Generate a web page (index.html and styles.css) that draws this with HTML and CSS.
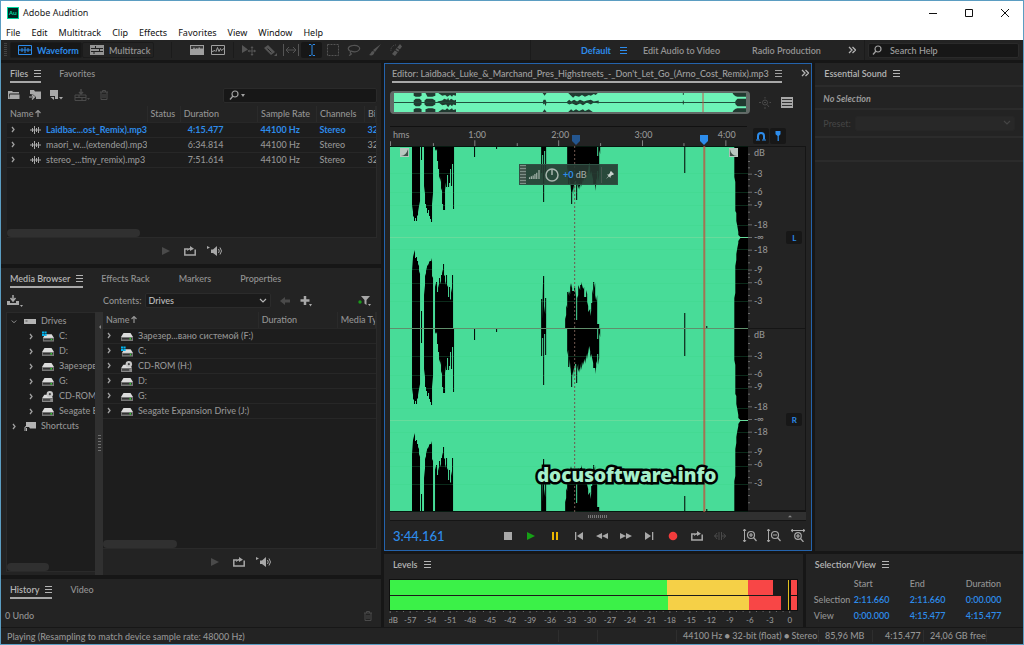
FILE: index.html
```html
<!DOCTYPE html>
<html lang="en">
<head>
  <meta charset="UTF-8" />
  <title>Adobe Audition</title>
  <link rel="stylesheet" href="styles.css">
</head>
<body>

  <svg class="sprite" aria-hidden="true">
    <symbol id="i-menu" viewBox="0 0 8 8"><path d="M1 1.500h7M1 4.500h7M1 7.500h7" stroke="currentColor" stroke-width="1"/></symbol>
    <symbol id="i-more" viewBox="0 0 8 8"><path d="M1 1l3 3-3 3M4.500 1l3 3-3 3" fill="none" stroke="currentColor" stroke-width="1.300"/></symbol>
    <symbol id="i-wave" viewBox="0 0 14 10"><path d="M.5.5h13v9H.5zM1 5h12M4 3v4M7 2v6M10 3v4" fill="none" stroke="currentColor"/></symbol>
    <symbol id="i-multi" viewBox="0 0 14 10"><path d="M0 0h14v10H0z" fill="currentColor"/><path d="M1 3.500h12M1 6.500h12M5.500 1v2M9.500 3.500v3M4 7v2" stroke="#232323"/></symbol>
    <symbol id="i-spec" viewBox="0 0 14 10"><path d="M0 0h14v10H0z" fill="currentColor"/><path d="M1 4V1h12v3l-1-1-1 1-2-2-1 2-1-1-2 1-1-2-1 2z" fill="#3a3a3a"/></symbol>
    <symbol id="i-pitch" viewBox="0 0 14 10"><path d="M.5.5h13v9H.5z M1 6.500l3-1 1 1 1.500-4 1.500 4 1.500-3 1 2 2.500-2" fill="none" stroke="currentColor"/></symbol>
    <symbol id="i-move" viewBox="0 0 14 12"><path d="M0 1l6 4.500L0 9z" fill="currentColor"/><path d="M10 3v8M6.500 7h7" stroke="currentColor"/><path d="M10 2l1.500 2h-3zM10 12l1.500-2h-3zM5.500 7l2-1.500v3zM14 7l-2-1.500v3z" fill="currentColor"/></symbol>
    <symbol id="i-razor" viewBox="0 0 14 12"><path d="M1 4l4-3 7 7-4 3z" fill="currentColor"/><path d="M4.500 4.500l4 4" stroke="#232323"/><path d="M14 9v3h-3z" fill="currentColor"/></symbol>
    <symbol id="i-slip" viewBox="0 0 16 12"><path d="M.5 0v12M15.500 0v12M3 6h10M6 3L3 6l3 3M10 3l3 3-3 3" fill="none" stroke="currentColor"/></symbol>
    <symbol id="i-time" viewBox="0 0 8 12"><path d="M1 .5h2l1 1 1-1h2M4 1.500v9M1 11.500h2l1-1 1 1h2" fill="none" stroke="currentColor"/></symbol>
    <symbol id="i-marquee" viewBox="0 0 12 12"><path d="M.5.5h11v11H.5z" fill="none" stroke="currentColor" stroke-dasharray="2 1"/></symbol>
    <symbol id="i-lasso" viewBox="0 0 14 12"><path d="M3 7C0 5 1 2 6 1.500s8 2 6 4.500-6 2-8 1c-1 1-1 2 0 2.500S3 11 2 11.500" fill="none" stroke="currentColor" stroke-width="1.200"/></symbol>
    <symbol id="i-brush" viewBox="0 0 12 12"><path d="M12 0L6 8 4 6zM4 7c-2 0-2 3-4 4 3 1 5 0 5.500-3z" fill="currentColor"/></symbol>
    <symbol id="i-heal" viewBox="0 0 12 12"><path d="M10 0l2 2.500L5 12l-3-2z" fill="currentColor"/><path d="M6 1a5 5 0 0 0-5 6" fill="none" stroke="currentColor" stroke-dasharray="1 1"/><path d="M5 6l3 2M7 4l3 2" stroke="#232323"/></symbol>
    <symbol id="i-search" viewBox="0 0 10 10"><circle cx="6" cy="4" r="3" fill="none" stroke="currentColor" stroke-width="1.200"/><path d="M4 6L1 9.500" stroke="currentColor" stroke-width="1.300"/></symbol>
    <symbol id="i-folder" viewBox="0 0 12 10"><path d="M0 1h4l1 1h6v1.500H1.500L1 5v4H0z M2 4.500h9.500V9H1z" fill="currentColor"/></symbol>
    <symbol id="i-import" viewBox="0 0 14 10"><path d="M2 0h4l1 1.500h6V9H8V7L5 4.500 2 4z" fill="currentColor"/><path d="M1 7h5M4 5l2.500 2L4 9.500" fill="none" stroke="currentColor" stroke-width="1.200"/></symbol>
    <symbol id="i-new" viewBox="0 0 14 10"><path d="M1 0h8v9H6V6H1z" fill="currentColor"/><path d="M1.500 7L5 7v3z M10 7h4l-2 2.500z" fill="currentColor"/></symbol>
    <symbol id="i-insert" viewBox="0 0 16 12"><path d="M1 6h11v5.500H1z M1 8.500h11M5 6v2M8 8v3" fill="none" stroke="currentColor"/><path d="M7 0v4M5 3l2 2 2-2" fill="none" stroke="currentColor" stroke-width="1.500"/><path d="M13 9h3l-1.500 2z" fill="currentColor"/></symbol>
    <symbol id="i-trash" viewBox="0 0 10 10"><path d="M1 2h8M3.500 2V.5h3V2M2 2v7.500h6V2M4 4v4M6 4v4" fill="none" stroke="currentColor"/></symbol>
    <symbol id="i-audio" viewBox="0 0 11 8"><path d="M0 4h11M2.500 2v4M4.500 0v8M6.500 2v4M8.500 1v6" stroke="currentColor"/></symbol>
    <symbol id="i-right" viewBox="0 0 6 8"><path d="M2 1l2 2.500L2 6" fill="none" stroke="currentColor" stroke-width="1.300"/></symbol>
    <symbol id="i-down" viewBox="0 0 8 6"><path d="M1 1l3 3 3-3" fill="none" stroke="currentColor" stroke-width="1.200"/></symbol>
    <symbol id="i-up" viewBox="0 0 6 8"><path d="M3 0v7M.5 3L3 .5 5.500 3" fill="none" stroke="currentColor" stroke-width="1.200"/></symbol>
    <symbol id="i-play" viewBox="0 0 12 10"><path d="M2 1l8 4-8 4z" fill="currentColor"/></symbol>
    <symbol id="i-loop" viewBox="0 0 12 10"><path d="M4 3H.8v6h10.400V3.500" fill="none" stroke="currentColor" stroke-width="1.500"/><path d="M3 5c0-2 1-3 3-3V0l4 2.800L6 5V3.500c-1 0-2 .5-3 1.500z" fill="currentColor"/></symbol>
    <symbol id="i-speaker" viewBox="0 0 16 10"><path d="M0 0l3 1.500L0 3z M4 3.500h2L10 0v10L6 7H4z" fill="currentColor"/><path d="M11.500 3q1.500 2 0 4M13 1.500q3 3.500 0 7" fill="none" stroke="currentColor"/></symbol>
    <symbol id="i-ingest" viewBox="0 0 16 12"><path d="M0 6h3v2h6V6h3v4H0z" fill="currentColor"/><path d="M6 0v5M3.500 3L6 6l2.500-3" fill="none" stroke="currentColor" stroke-width="1.500"/><path d="M13 10h3l-1.500 2z" fill="currentColor"/></symbol>
    <symbol id="i-back" viewBox="0 0 10 10"><path d="M0 5l5-4v2.500h5v3H5V9z" fill="currentColor"/></symbol>
    <symbol id="i-plus" viewBox="0 0 12 12"><path d="M5 1v9M.5 5.500h9" stroke="currentColor" stroke-width="2.500"/><path d="M9 9h3l-1.500 2.500z" fill="currentColor"/></symbol>
    <symbol id="i-filter" viewBox="0 0 14 12"><circle cx="2" cy="7" r="1.700" fill="#1a9a1a"/><path d="M3 1h9L8.500 5v5L6.500 8.500V5z" fill="currentColor"/><path d="M10 9h3l-1.500 2z" fill="currentColor"/></symbol>
    <symbol id="i-drive" viewBox="0 0 12 9"><path d="M2.500 1h7L12 5H0z" fill="#dcdcdc"/><path d="M0 5h12v4H0z" fill="#777"/><path d="M1 6h10v1.500H1z" fill="#333"/><path d="M8.500 6h1.500v1.500H8.500z" fill="#28d228"/></symbol>
    <symbol id="i-cdrive" viewBox="0 0 13 11"><path d="M3.500 3h7L13 7H1z" fill="#dcdcdc"/><path d="M1 7h12v4H1z" fill="#777"/><path d="M2 8h10v1.500H2z" fill="#333"/><path d="M9.500 8H11v1.500H9.500z" fill="#28d228"/><path d="M0 0h2.300v2.300H0zM2.700 0H5v2.300H2.700zM0 2.700h2.300V5H0zM2.700 2.700H5V5H2.700z" fill="#00b4f0"/></symbol>
    <symbol id="i-cdrom" viewBox="0 0 13 12"><path d="M2.500 4h7L12 8H0z" fill="#dcdcdc"/><path d="M0 8h12v4H0z" fill="#888"/><path d="M1 9h8v1.500H1z" fill="#333"/><circle cx="8.500" cy="3.500" r="3.500" fill="#c8c8c8"/><circle cx="8.500" cy="3.500" r="1.200" fill="#444"/></symbol>
    <symbol id="i-drives" viewBox="0 0 12 5"><path d="M0 0h12v5H0z" fill="#b4b4b4"/><path d="M1.500 2h2" stroke="#555"/></symbol>
    <symbol id="i-short" viewBox="0 0 12 9"><path d="M2 0h10v6.500H6L5 5H2z" fill="#b4b4b4"/><path d="M1 9V5l3-1.500M2.500 9V6" stroke="#b4b4b4" fill="none"/></symbol>
    <symbol id="i-zoomnav" viewBox="0 0 12 12"><circle cx="6" cy="5.500" r="2.500" fill="none" stroke="currentColor"/><path d="M8 7.500l2 2.500M5 5.500h2M6 0v1.500M6 10v2M0 5.500h2M10.500 5.500H12" stroke="currentColor"/></symbol>
    <symbol id="i-rows" viewBox="0 0 12 12"><path d="M0 0h12v11H0z" fill="currentColor"/><path d="M1 2.500h10M1 5.500h10M1 8.500h10" stroke="#333"/></symbol>
    <symbol id="i-magnet" viewBox="0 0 10 10"><path d="M2 8.500V5a3 3 0 0 1 6 0v3.500" fill="none" stroke="currentColor" stroke-width="2"/><path d="M0 9h4M6 9h4" stroke="currentColor"/></symbol>
    <symbol id="i-pin" viewBox="0 0 8 12"><path d="M1 0h6v4L5 6v6H3.500V6L1 4z" fill="currentColor"/></symbol>
    <symbol id="i-stop" viewBox="0 0 12 10"><path d="M2 1h8v8H2z" fill="currentColor"/></symbol>
    <symbol id="i-pause" viewBox="0 0 12 10"><path d="M3 1h2v8H3zM7 1h2v8H7z" fill="currentColor"/></symbol>
    <symbol id="i-first" viewBox="0 0 12 10"><path d="M2 1h1.300v8H2zM10 1v8L4 5z" fill="currentColor"/></symbol>
    <symbol id="i-last" viewBox="0 0 12 10"><path d="M9 1h1.300v8H9zM2 1v8l6-4z" fill="currentColor"/></symbol>
    <symbol id="i-rew" viewBox="0 0 12 10"><path d="M6 2v6L0 5zM12 2v6L6 5z" fill="currentColor"/></symbol>
    <symbol id="i-fwd" viewBox="0 0 12 10"><path d="M0 2v6l6-3zM6 2v6l6-3z" fill="currentColor"/></symbol>
    <symbol id="i-rec" viewBox="0 0 12 10"><circle cx="6" cy="5" r="4.300" fill="currentColor"/></symbol>
    <symbol id="i-skip" viewBox="0 0 12 10"><path d="M3 2L.8 5 3 8M0 5h4M5 1v8M7.500 1v8M8 5h4M9.500 2.500L11.500 5 9.500 7.500" fill="none" stroke="currentColor"/></symbol>
    <symbol id="i-vin" viewBox="0 0 14 13"><path d="M1.500 0v13M0 2L1.500 0 3 2M0 11l1.500 2L3 11" fill="none" stroke="currentColor"/><circle cx="8" cy="6" r="3.500" fill="none" stroke="currentColor" stroke-width="1.200"/><path d="M10.500 8.500l3 3.500M6 6h4M8 4v4" stroke="currentColor" stroke-width="1.200"/></symbol>
    <symbol id="i-vout" viewBox="0 0 14 13"><path d="M1.500 0v13M0 2L1.500 0 3 2M0 11l1.500 2L3 11" fill="none" stroke="currentColor"/><circle cx="8" cy="6" r="3.500" fill="none" stroke="currentColor" stroke-width="1.200"/><path d="M10.500 8.500l3 3.500M6 6h4" stroke="currentColor" stroke-width="1.200"/></symbol>
    <symbol id="i-hin" viewBox="0 0 14 13"><path d="M0 1.500h14M2 0L0 1.500 2 3M12 0l2 1.500L12 3" fill="none" stroke="currentColor"/><circle cx="7" cy="7" r="3.300" fill="none" stroke="currentColor" stroke-width="1.200"/><path d="M9.500 9.500l3 3.500M5 7h4M7 5v4" stroke="currentColor" stroke-width="1.200"/></symbol>
  </svg>

  <header class="titlebar">
    <svg class="logo" viewBox="0 0 12 12"><rect x=".5" y=".5" width="11" height="11" fill="#00241f" stroke="#00d8a0"/><text x="6" y="8" class="logo-text">Au</text></svg>
    <span class="title">Adobe Audition</span>
    <button class="win-btn" aria-label="Minimize"><svg viewBox="0 0 10 10"><path d="M1 5.500h8" stroke="#111"/></svg></button>
    <button class="win-btn" aria-label="Maximize"><svg viewBox="0 0 10 10"><path d="M1.500 1.500h7v7h-7z" fill="none" stroke="#111"/></svg></button>
    <button class="win-btn" aria-label="Close"><svg viewBox="0 0 10 10"><path d="M1 1l8 8M9 1L1 9" stroke="#111"/></svg></button>
  </header>
  <nav class="menubar">
    <button>File</button><button>Edit</button><button>Multitrack</button><button>Clip</button><button>Effects</button><button>Favorites</button><button>View</button><button>Window</button><button>Help</button>
  </nav>

  <div class="toolbar">
    <span class="grip"></span>
    <button class="mode active"><svg class="ic"><use href="#i-wave"/></svg>Waveform</button>
    <button class="mode"><svg class="ic"><use href="#i-multi"/></svg>Multitrack</button>
    <div class="tools views">
      <button class="tool lit" aria-label="Spectral frequency"><svg class="ic"><use href="#i-spec"/></svg></button>
      <button class="tool lit" aria-label="Spectral pitch"><svg class="ic"><use href="#i-pitch"/></svg></button>
    </div>
    <div class="tools">
      <button class="tool" aria-label="Move"><svg class="ic"><use href="#i-move"/></svg></button>
      <button class="tool" aria-label="Razor"><svg class="ic"><use href="#i-razor"/></svg></button>
      <button class="tool" aria-label="Slip"><svg class="ic wide"><use href="#i-slip"/></svg></button>
      <button class="tool active" aria-label="Time selection"><svg class="ic"><use href="#i-time"/></svg></button>
      <button class="tool" aria-label="Marquee"><svg class="ic"><use href="#i-marquee"/></svg></button>
      <button class="tool" aria-label="Lasso"><svg class="ic"><use href="#i-lasso"/></svg></button>
      <button class="tool" aria-label="Paintbrush"><svg class="ic"><use href="#i-brush"/></svg></button>
      <button class="tool" aria-label="Spot healing"><svg class="ic"><use href="#i-heal"/></svg></button>
    </div>
    <div class="workspaces">
      <button class="ws active">Default <svg class="mi"><use href="#i-menu"/></svg></button>
      <button class="ws">Edit Audio to Video</button>
      <button class="ws">Radio Production</button>
      <button class="ws more" aria-label="More workspaces"><svg class="mi"><use href="#i-more"/></svg></button>
    </div>
    <label class="field help"><svg class="ic"><use href="#i-search"/></svg><input type="text" placeholder="Search Help" aria-label="Search Help"></label>
  </div>

  <main class="workspace">
    <div class="left">
      <section class="panel files">
        <div class="tabs">
          <button class="tab active">Files <svg class="mi"><use href="#i-menu"/></svg></button>
          <button class="tab">Favorites</button>
        </div>
        <div class="bar">
          <button class="icon-btn" aria-label="Open"><svg class="ic"><use href="#i-folder"/></svg></button>
          <button class="icon-btn" aria-label="Import"><svg class="ic"><use href="#i-import"/></svg></button>
          <button class="icon-btn" aria-label="New"><svg class="ic"><use href="#i-new"/></svg></button>
          <button class="icon-btn off insert" aria-label="Insert"><svg class="ic wide"><use href="#i-insert"/></svg></button>
          <button class="icon-btn off" aria-label="Delete"><svg class="ic"><use href="#i-trash"/></svg></button>
          <label class="field filter"><svg class="ic"><use href="#i-search"/></svg><svg class="caret" viewBox="0 0 4 3"><path d="M0 0h4L2 3z"/></svg><input type="text" aria-label="Search files"></label>
        </div>
        <div class="list files-list">
          <table class="grid files-grid">
            <colgroup><col class="c-name"><col class="c-status"><col class="c-dur"><col class="c-rate"><col class="c-chan"><col class="c-bit"></colgroup>
            <thead><tr><th>Name<svg class="sort"><use href="#i-up"/></svg></th><th>Status</th><th>Duration</th><th>Sample Rate</th><th>Channels</th><th>Bi</th></tr></thead>
            <tbody>
              <tr class="open"><td><svg class="arrow"><use href="#i-right"/></svg><svg class="wav"><use href="#i-audio"/></svg>Laidbac...ost_Remix).mp3</td><td></td><td class="num">4:15.477</td><td class="num">44100 Hz</td><td>Stereo</td><td>32</td></tr>
              <tr><td><svg class="arrow"><use href="#i-right"/></svg><svg class="wav"><use href="#i-audio"/></svg>maori_w...(extended).mp3</td><td></td><td class="num">6:34.814</td><td class="num">44100 Hz</td><td>Stereo</td><td>32</td></tr>
              <tr><td><svg class="arrow"><use href="#i-right"/></svg><svg class="wav"><use href="#i-audio"/></svg>stereo_...tiny_remix).mp3</td><td></td><td class="num">7:51.614</td><td class="num">44100 Hz</td><td>Stereo</td><td>32</td></tr>
            </tbody>
          </table>
          <div class="scroll scroll-files"></div>
        </div>
        <div class="preview">
          <button class="icon-btn off" aria-label="Play"><svg class="ic"><use href="#i-play"/></svg></button>
          <button class="icon-btn" aria-label="Loop"><svg class="ic"><use href="#i-loop"/></svg></button>
          <button class="icon-btn" aria-label="Auto-play"><svg class="ic wide"><use href="#i-speaker"/></svg></button>
        </div>
      </section>

      <section class="panel media">
        <div class="tabs">
          <button class="tab active">Media Browser <svg class="mi"><use href="#i-menu"/></svg></button>
          <button class="tab">Effects Rack</button>
          <button class="tab gap">Markers</button>
          <button class="tab gap">Properties</button>
        </div>
        <div class="bar media-bar">
          <button class="icon-btn ingest" aria-label="Ingest"><svg class="ic wide"><use href="#i-ingest"/></svg></button>
          <label for="contents">Contents:</label>
          <span class="select"><select id="contents"><option>Drives</option></select><svg class="mi"><use href="#i-down"/></svg></span>
          <button class="icon-btn off" aria-label="Back"><svg class="ic small"><use href="#i-back"/></svg></button>
          <button class="icon-btn" aria-label="Add shortcut"><svg class="ic"><use href="#i-plus"/></svg></button>
          <button class="icon-btn funnel" aria-label="Filter"><svg class="ic"><use href="#i-filter"/></svg></button>
        </div>
        <div class="browser">
          <div class="tree">
            <ul>
              <li><svg class="arrow"><use href="#i-down"/></svg><svg class="dev"><use href="#i-drives"/></svg>Drives
                <ul>
                  <li><svg class="arrow"><use href="#i-right"/></svg><svg class="dev"><use href="#i-cdrive"/></svg>C:</li>
                  <li><svg class="arrow"><use href="#i-right"/></svg><svg class="dev"><use href="#i-drive"/></svg>D:</li>
                  <li><svg class="arrow"><use href="#i-right"/></svg><svg class="dev"><use href="#i-drive"/></svg>Зарезерв</li>
                  <li><svg class="arrow"><use href="#i-right"/></svg><svg class="dev"><use href="#i-drive"/></svg>G:</li>
                  <li><svg class="arrow"><use href="#i-right"/></svg><svg class="dev"><use href="#i-cdrom"/></svg>CD-ROM</li>
                  <li><svg class="arrow"><use href="#i-right"/></svg><svg class="dev"><use href="#i-drive"/></svg>Seagate E</li>
                </ul>
              </li>
              <li><svg class="arrow"><use href="#i-right"/></svg><svg class="dev"><use href="#i-short"/></svg>Shortcuts</li>
            </ul>
            <div class="scroll scroll-tree"></div>
          </div>
          <div class="splitter"><span class="fold"></span><span class="dots"></span></div>
          <div class="content">
            <div class="list drive-list">
              <table class="grid drive-grid">
                <colgroup><col class="d-name"><col class="d-dur"><col></colgroup>
                <thead><tr><th>Name<svg class="sort"><use href="#i-up"/></svg></th><th>Duration</th><th>Media Ty</th></tr></thead>
                <tbody>
                  <tr><td><svg class="arrow"><use href="#i-right"/></svg><svg class="dev"><use href="#i-drive"/></svg>Зарезер...вано системой (F:)</td><td></td><td></td></tr>
                  <tr><td><svg class="arrow"><use href="#i-right"/></svg><svg class="dev"><use href="#i-cdrive"/></svg>C:</td><td></td><td></td></tr>
                  <tr><td><svg class="arrow"><use href="#i-right"/></svg><svg class="dev"><use href="#i-cdrom"/></svg>CD-ROM (H:)</td><td></td><td></td></tr>
                  <tr><td><svg class="arrow"><use href="#i-right"/></svg><svg class="dev"><use href="#i-drive"/></svg>D:</td><td></td><td></td></tr>
                  <tr><td><svg class="arrow"><use href="#i-right"/></svg><svg class="dev"><use href="#i-drive"/></svg>G:</td><td></td><td></td></tr>
                  <tr><td><svg class="arrow"><use href="#i-right"/></svg><svg class="dev"><use href="#i-drive"/></svg>Seagate Expansion Drive (J:)</td><td></td><td></td></tr>
                </tbody>
              </table>
              <div class="scroll scroll-drives"></div>
            </div>
            <div class="preview">
              <button class="icon-btn off" aria-label="Play"><svg class="ic"><use href="#i-play"/></svg></button>
              <button class="icon-btn" aria-label="Loop"><svg class="ic"><use href="#i-loop"/></svg></button>
              <button class="icon-btn" aria-label="Auto-play"><svg class="ic wide"><use href="#i-speaker"/></svg></button>
            </div>
          </div>
        </div>
      </section>

      <section class="panel history">
        <div class="tabs">
          <button class="tab active">History <svg class="mi"><use href="#i-menu"/></svg></button>
          <button class="tab">Video</button>
        </div>
        <div class="undo"><span>0 Undo</span><button class="icon-btn off" aria-label="Clear history"><svg class="ic small"><use href="#i-trash"/></svg></button></div>
      </section>
    </div>

    <div class="right">
      <div class="top">
        <section class="panel editor">
          <div class="tabs">
            <button class="tab active">Editor: Laidback_Luke_&amp;_Marchand_Pres_Highstreets_-_Don't_Let_Go_(Arno_Cost_Remix).mp3 <svg class="mi"><use href="#i-menu"/></svg></button>
            <button class="tab more" aria-label="More tabs"><svg class="mi"><use href="#i-more"/></svg></button>
          </div>

          <div class="nav-row">
            <div class="overview">
              <svg viewBox="0 0 358 20" preserveAspectRatio="none">
                <g fill="#203a30">
                  <path d="M20 0h8v3l-2 1h-4l-2-1zM32 0h10v3l-3 1h-5zM45 0h18v3l-3-1-1 2-2-2-3 2-2-2-3 1zM151 0h4l-2 3zM177 0h30l-2 2-2-1-3 2-2-1-4 2-3-2-3 2-4-1-2 2z"/>
                  <path d="M20 8l2-2h4l2 2v4l-2 2h-4l-2-2zM31 8l2-2h6l3 2v4l-3 2h-6l-2-2zM44 9l5-1 2-2 3 1 1-2 1 3 2-2 3 2 2-1v6l-3-1-1 2-2-2-2 3-2-3-4 1zM151 10l1-3h2l1 3-1 4-1-3-1 1zM175 10l3-3 2 2 3-2 3 2 3-2 4 2 3-1 4-1 3 2 5-1v3l-5-1-3 2-4-2-4 3-3-2-4 2-4-2-3 1z"/>
                  <path d="M20 20v-3l2-1h4l2 1v3zM32 20v-3l3-1h4l3 1v3zM45 20l4-3 3 1 2-2 2 2 3-2 1 2 3-1v3zM151 20l2-3 2 3zM177 20l3-3 2 2 3-2 3 2 4-2 2 2 4-2 4 3z"/>
                  <path d="M344 0h14v4h-9q-4-1-5-4zM349 6h9v8h-9q-5-4 0-8zM344 20q1-3 5-4h9v4z"/>
                </g>
                <path d="M0 10h348" stroke="#1e4a38"/>
                <path d="M294 0v2M294 8v4" stroke="#203a30"/>
                <path d="M314 0v20" stroke="#c84f48"/>
              </svg>
            </div>
            <button class="icon-btn off" aria-label="Zoom navigator"><svg class="ic"><use href="#i-zoomnav"/></svg></button>
            <button class="icon-btn" aria-label="Display list"><svg class="ic"><use href="#i-rows"/></svg></button>
          </div>

          <div class="time-row">
            <div class="ruler">
              <svg class="ruler-ticks" viewBox="0 0 358 20" preserveAspectRatio="none"><path d="M.5 15v5M43.500 17v3M85 14v6M127.500 17v3M169 14v6M211 17v3M253 14v6M294.500 17v3M336.500 14v6" stroke="#888"/></svg>
              <span class="t hms">hms</span><span class="t">1:00</span><span class="t">2:00</span><span class="t">3:00</span><span class="t end">4:00</span>
              <svg class="mark cue" viewBox="0 0 10 10"><path d="M1 0h8v6L5 10 1 6z"/></svg>
              <svg class="mark head" viewBox="0 0 10 10"><path d="M1 0h8v6L5 10 1 6z"/></svg>
            </div>
            <button class="sq" aria-label="Snapping"><svg class="ic"><use href="#i-magnet"/></svg></button>
            <button class="sq" aria-label="Add marker"><svg class="ic"><use href="#i-pin"/></svg></button>
          </div>

          <div class="wave-row">
            <div class="wave">
              <svg class="wave-svg" viewBox="0 0 358 366" preserveAspectRatio="none">
                <defs>
                  <g id="channel">
                    <path d="M22 0V59l1 7v4l1 1v4h1v-3h1v3h1v-5l1-1v-3l1-6 1-5V0zM31 0h1v14h-1zM34 0v40l1 8v10h1v4h1v5h1v-3h1v6h1v3h1v3h1V58l1-11V0zM45 0v5l1-2v2l1-2v12h1v8h1v10l1-3v6l1-4v13l1-3v16h1v6h2V44l1-8v5h1V29h1v12h1v-4h1V23h1v17h1V18h1v45h1V0z"/>
                    <path d="M22 183v-58l1-14 1-4v-3l1 3v5h1v-1h1v4h1v3l1 2v5l1 3V183zM31 183v-18h1v18zM34 183v-34l1-10v-9l1-3v-6l1 4v-6l1 1v-3l1 2v-4l1 1v-1h1v-3l1 4v14l1 2V183zM45 183v-46l1 4v-5h1v10h1v-8l1 4v-10h1v6l1-3v-6h1v-2l1-4v-5h1v12l1-1v10l1-4v-6h1v12l1-2v12h1v-10h1v12l1 1v-12l1 5v-18h1V183z"/>
                    <path d="M84 0h1v11h-1zM106 0h1v3h-1zM151 0h5v26h-1V5h-1v51h-1V9h-1v18h-1zM151 183v-30h1v20l1-43h1v30l1 8v-16h1V183z"/>
                    <path d="M177 0v26l1-5v17h1v-8l1 10v-6l1 13v11h1V43l1 5v-9l1 6v-9l1 3v-4h1v19h1V41l1-6v8l1-3v4l1-6v4l1-9v8l2-9v4l2-7v6l2-11v6l2-13 1 5v7l1-4 2 9v5h2v6l1-7v-6l1 3v-10h1v11l1-7V4l1 4V0zM207 0h1v10h-1z"/>
                    <path d="M175 183v-10l1-4v-10l1 3v-16h1v-1l1 5v-5l1 3v-11l1 5v-5l1 5v3h2v-3h1v2l1 8v22h1v-22l1-3v-10l2 5v-5h1v-3l2 7 1-2v10h2v-7l1 4v8l1 4v6l2-3v7l1-5v-8h1v-14l1 5v-12h1v6l1-5v12l1 6 1-6v34zM207 183v-5h2v5z"/>
                    <path d="M294 0h1v27h-1zM294 167h1v16h-1zM316 180h1v3h-1z"/>
                    <path d="M344 0v31l1 5v29l1 2v8l1 5 1 6v3l2 2h8V0zM344 183v-31l1-5v-27l1-6v-6l1-6 1-5v-2l2-3h8v91z"/>
                    <path class="center" d="M0 91.500h358"/>
                    <path class="db" d="M0 27.500h358M0 46.500h358M0 59.500h358M0 79.500h358M0 103.500h358M0 123.500h358M0 137.500h358M0 155.500h358"/>
                  </g>
                </defs>
                <use href="#channel"/>
                <use href="#channel" y="183"/>
                <path class="rim" d="M0 0h358M0 366h358"/>
                <path class="split" d="M0 182.500h358"/>
                <path class="cue-line" d="M184.500 0v366"/>
                <path class="head-line" d="M314 0v366"/>
              </svg>
              <svg class="fade fade-in" viewBox="0 0 10 10"><path d="M0 0h10v10H0z" fill="#b9c7c0"/><path d="M1 9Q7 8 9 1v8z" fill="#3f5048"/></svg>
              <svg class="fade fade-out" viewBox="0 0 10 10"><path d="M0 0h10v10H0z" fill="#b9c7c0"/><path d="M1 1Q2 8 9 9H1z" fill="#3f5048"/></svg>
              <div class="hud">
                <span class="hud-grip"></span>
                <svg class="hud-bars" viewBox="0 0 13 10"><path d="M1 8v2M3 7v3M5 6v4M7 4.500V10M9 3v7M11.500 0v10" stroke="#a8b5ae" stroke-width="1.300"/></svg>
                <svg class="knob" viewBox="0 0 14 14"><circle cx="7" cy="7" r="6" fill="none" stroke="#a8b5ae" stroke-width="1.500"/><path d="M7 1v6" stroke="#a8b5ae" stroke-width="1.500"/></svg>
                <span class="gain"><b>+0</b> dB</span>
                <button class="hud-pin" aria-label="Pin"><svg viewBox="0 0 8 8"><path d="M5 0l3 3-1 1h-1L4.500 5.500V7L3 5.500 0 8l2.500-3L1 3.500h1.500L4 2V1z" fill="#c8d0cc"/></svg></button>
              </div>
              <div class="brand">docusoftware.info</div>
            </div>
            <div class="scale">
              <div class="scale-ch"><svg class="db-scale"></svg><button class="ch">L</button></div>
              <div class="scale-ch"><svg class="db-scale"></svg><button class="ch">R</button></div>
            </div>
          </div>
          <div class="hscroll"><span class="dots"></span><svg viewBox="0 0 6 4"><path d="M0 3l3-3 3 3z" fill="#8a8a8a"/></svg></div>

          <div class="transport">
            <span class="clock">3:44.161</span>
            <div class="keys">
              <button class="key" aria-label="Stop"><svg class="ic"><use href="#i-stop"/></svg></button>
              <button class="key play" aria-label="Play"><svg class="ic"><use href="#i-play"/></svg></button>
              <button class="key pause" aria-label="Pause"><svg class="ic"><use href="#i-pause"/></svg></button>
              <button class="key" aria-label="Previous"><svg class="ic"><use href="#i-first"/></svg></button>
              <button class="key" aria-label="Rewind"><svg class="ic"><use href="#i-rew"/></svg></button>
              <button class="key" aria-label="Fast forward"><svg class="ic"><use href="#i-fwd"/></svg></button>
              <button class="key" aria-label="Next"><svg class="ic"><use href="#i-last"/></svg></button>
              <button class="key rec" aria-label="Record"><svg class="ic"><use href="#i-rec"/></svg></button>
              <button class="key" aria-label="Loop playback"><svg class="ic"><use href="#i-loop"/></svg></button>
              <button class="key off" aria-label="Skip selection"><svg class="ic"><use href="#i-skip"/></svg></button>
            </div>
            <div class="keys zooms">
              <button class="key" aria-label="Zoom in amplitude"><svg class="ic"><use href="#i-vin"/></svg></button>
              <button class="key" aria-label="Zoom out amplitude"><svg class="ic"><use href="#i-vout"/></svg></button>
              <button class="key" aria-label="Zoom in time"><svg class="ic"><use href="#i-hin"/></svg></button>
            </div>
          </div>
        </section>

        <section class="panel essential">
          <div class="tabs"><h2 class="tab heading">Essential Sound <svg class="mi"><use href="#i-menu"/></svg></h2></div>
          <div class="none">No Selection</div>
          <div class="preset">
            <label for="preset">Preset:</label>
            <span class="select"><select id="preset" disabled><option></option></select><svg class="mi"><use href="#i-down"/></svg></span>
          </div>
          <div class="rule"></div>
        </section>
      </div>

      <div class="bottom">
        <section class="panel levels">
          <div class="tabs"><h2 class="tab heading">Levels <svg class="mi"><use href="#i-menu"/></svg></h2></div>
          <div class="meter">
            <div class="bars">
              <div class="bar-l"><i class="g"></i><i class="y"></i><i class="r"></i></div>
              <div class="bar-r"><i class="g"></i><i class="y"></i><i class="r"></i></div>
            </div>
            <div class="clips"><i></i><i></i></div>
          </div>
          <svg class="level-scale"></svg>
        </section>

        <section class="panel selview">
          <div class="tabs"><h2 class="tab heading">Selection/View <svg class="mi"><use href="#i-menu"/></svg></h2></div>
          <table class="times">
            <thead><tr><th></th><th>Start</th><th>End</th><th>Duration</th></tr></thead>
            <tbody>
              <tr><th>Selection</th><td>2:11.660</td><td>2:11.660</td><td>0:00.000</td></tr>
              <tr><th>View</th><td>0:00.000</td><td>4:15.477</td><td>4:15.477</td></tr>
            </tbody>
          </table>
        </section>
      </div>
    </div>
  </main>

  <footer class="status">
    <span class="msg">Playing (Resampling to match device sample rate: 48000 Hz)</span>
    <span class="cell empty"></span>
    <span class="cell blank"></span>
    <span class="cell format">44100 Hz ● 32-bit (float) ● Stereo</span>
    <span class="cell size">85,96 MB</span>
    <span class="cell dur">4:15.477</span>
    <span class="cell free">24,06 GB free</span>
    <span class="cell tail"></span>
  </footer>

  <script src="script.js"></script>
</body>
</html>
```

FILE: styles.css
```css
* {
  box-sizing: border-box;
}

body {
  margin: 0;
  height: 100vh;
  display: flex;
  flex-direction: column;
  overflow: hidden;
  background: #161616;
  border: 1px solid #5b9dc2;
  color: #949494;
  font-family: Lato, "Noto Sans", sans-serif;
  font-size: 9px;
  font-weight: 500;
  line-height: 15px;
}

button, input, select {
  font: inherit;
  color: inherit;
  background: none;
  border: 0;
  padding: 0;
  margin: 0;
}

h2, ul {
  margin: 0;
  padding: 0;
  font: inherit;
  list-style: none;
}

svg {
  display: block;
  flex: none;
}

.sprite {
  position: absolute;
  width: 0;
  height: 0;
}

.ic { width: 14px; height: 12px; }
.ic.wide { width: 16px; }
.ic.small { width: 10px; height: 10px; }
.mi { width: 8px; height: 8px; }

/* window chrome */
.titlebar {
  display: flex;
  align-items: center;
  height: 23px;
  padding: 0 0 0 6px;
  background: #fff;
  color: #222;
  font-family: "Noto Sans", sans-serif;
  font-weight: 400;
}

.logo { width: 12px; height: 12px; }

.logo-text {
  fill: #00d8a0;
  font-size: 6px;
  font-weight: 600;
  text-anchor: middle;
}

.title {
  flex: 1;
  padding-left: 4px;
  font-size: 9px;
}

.win-btn {
  width: 36px;
  height: 22px;
  display: flex;
  align-items: center;
  justify-content: center;
}

.win-btn svg { width: 10px; height: 10px; }

.menubar {
  display: flex;
  gap: 11px;
  height: 16px;
  padding-left: 5px;
  background: #fff;
  color: #111;
  font-family: "Noto Sans", sans-serif;
  font-weight: 400;
}

/* toolbar */
.toolbar {
  display: flex;
  align-items: center;
  height: 20px;
  margin-bottom: 3px;
  padding: 0 4px 0 3px;
  background: #232323;
  font-weight: 600;
}

.grip {
  width: 3px;
  height: 14px;
  margin-right: 3px;
  background: repeating-linear-gradient(#444 0 1px, transparent 1px 2px);
}

.mode {
  display: flex;
  align-items: center;
  gap: 5px;
  width: 72px;
  height: 16px;
  padding-left: 7px;
  border: 1px solid #1b1b1b;
  border-radius: 2px;
}

.mode .ic { height: 10px; }

.mode.active, .tool.active {
  background: #171717;
  color: #2d8ceb;
}

.mode.active { font-weight: 700; }

.tools {
  display: flex;
  padding-left: 4px;
  border-left: 1px solid #1b1b1b;
}

.tools.views {
  margin-left: 17px;
  padding: 0 5px 0 14px;
}

.tool {
  display: flex;
  align-items: center;
  justify-content: center;
  width: 21px;
  height: 16px;
  border-radius: 2px;
  color: #555;
}

.tool.lit { color: #a0a0a0; }
.tool.lit .ic { height: 10px; }

.workspaces {
  flex: 1;
  display: flex;
  align-items: center;
  margin-left: auto;
  max-width: 335px;
  height: 20px;
  margin-right: 3px;
  padding-left: 50px;
  border: 1px solid #1b1b1b;
  border-width: 0 1px;
}

.ws {
  display: flex;
  align-items: center;
  gap: 8px;
  margin-right: 16px;
  white-space: nowrap;
}

.ws:nth-child(2) { margin-right: 32px; }
.ws.active { color: #2d8ceb; font-weight: 700; }

.ws.more {
  margin: 0 8px 0 auto;
  color: #b4b4b4;
}

.field {
  display: flex;
  align-items: center;
  height: 15px;
  padding-left: 3px;
  background: #171717;
  border: 1px solid #2a2a2a;
  border-radius: 2px;
  color: #a0a0a0;
}

.field .ic { height: 10px; }

.field input {
  flex: 1;
  min-width: 0;
  outline: 0;
}

.field.help { width: 151px; padding-left: 1px; font-weight: 500; }
.field.help input { padding-left: 6px; }
.field input::placeholder { color: #a0a0a0; opacity: 1; }

/* panels */
.workspace {
  flex: 1;
  min-height: 0;
  display: grid;
  grid-template-columns: 380fr 639fr;
  gap: 3px;
}

.left, .right {
  min-width: 0;
  min-height: 0;
  display: flex;
  flex-direction: column;
  gap: 4px;
}

.right { gap: 3px; }

.panel {
  background: #232323;
  display: flex;
  flex-direction: column;
  min-width: 0;
}

.tabs {
  display: flex;
  gap: 18px;
  height: 21px;
  flex: none;
  padding: 2px 9px 0;
}

.tab {
  display: flex;
  align-items: center;
  gap: 5px;
  height: 18px;
  border-bottom: 2px solid transparent;
  white-space: nowrap;
}

.tab.active {
  color: #b4b4b4;
  font-weight: 600;
  border-color: #a8a8a8;
}

.tab.gap { padding-left: 11px; }

.heading {
  color: #b4b4b4;
  font-weight: 600;
}

.bar {
  display: flex;
  align-items: center;
  height: 22px;
  padding: 0 4px 0 6px;
  gap: 7px;
}

.icon-btn {
  display: flex;
  align-items: center;
  justify-content: center;
  min-width: 14px;
  color: #a8a8a8;
}

.icon-btn .ic { height: 10px; }
.icon-btn.off { color: #4a4a4a; }
.icon-btn.insert { margin: 0 0 0 4px; }
.insert .ic { height: 12px; }

.field.filter {
  width: 154px;
  margin-left: auto;
}

.caret {
  width: 4px;
  height: 3px;
  fill: #a0a0a0;
}

.list {
  flex: 1;
  min-height: 0;
  display: flex;
  flex-direction: column;
  border-bottom: 1px solid #2a2a2a;
  border-right: 1px solid #2a2a2a;
  background: #1d1d1d;
  overflow: hidden;
}

.files { flex: 201; }
.media { flex: 307; }

.files-list { margin: 0 4px 0 6px; }

.grid {
  width: 100%;
  table-layout: fixed;
  border-collapse: collapse;
}

.grid th, .grid td {
  height: 15px;
  padding: 0 0 0 3px;
  border-bottom: 1px solid #272727;
  font-weight: 500;
  line-height: 14px;
  text-align: left;
  white-space: nowrap;
  overflow: hidden;
}

.grid th {
  height: 16px;
  background: #232323;
  border-right: 1px solid #2a2a2a;
}

.grid svg {
  display: inline-block;
  vertical-align: middle;
}

.grid .open td { color: #2d8ceb; font-weight: 700; }

.c-name { width: 38%; }
.c-status { width: 9%; }
.c-dur { width: 21%; }
.c-rate { width: 16%; }
.c-chan { width: 13%; }
.c-bit { width: 3%; }
.d-name { width: 57%; }
.d-dur { width: 29%; }

.files-grid .num {
  text-align: right;
  padding-right: 19px;
}

.files-grid .num:nth-child(3) { padding-right: 34px; }

.sort { width: 6px; height: 8px; margin-left: 2px; }
.arrow { width: 6px; height: 8px; color: #a0a0a0; }
.wav { width: 11px; height: 8px; margin: 0 5px 0 14px; color: #a8a8a8; }
.dev { width: 12px; height: 11px; }

.scroll {
  height: 8px;
  flex: none;
  margin-top: auto;
  border-radius: 4px;
  background: #303030;
}

.scroll-files { width: 36%; }
.scroll-tree { width: 48%; }
.scroll-drives { width: 27%; }

.preview {
  flex: none;
  display: flex;
  align-items: center;
  justify-content: center;
  gap: 10px;
  height: 24px;
}

.files .preview { height: 26px; }

.media-bar { height: 23px; padding-right: 9px; }
.ingest { margin-right: 73px; }
.ingest .ic, .media-bar .ic { height: 12px; }
.media-bar .off .ic { height: 10px; }
.funnel { margin-left: auto; }

.select {
  display: flex;
  align-items: center;
  width: 126px;
  height: 15px;
  padding: 0 3px 0 2px;
  background: #1b1b1b;
  border: 1px solid #2b2b2b;
  border-radius: 2px;
  color: #b4b4b4;
}

.select select {
  flex: 1;
  min-width: 0;
  appearance: none;
  font-weight: 600;
}

.media-bar .select { margin-left: -3px; }

.browser {
  flex: 1;
  min-height: 0;
  display: flex;
}

.tree {
  width: 89px;
  margin: 0 0 3px 5px;
  display: flex;
  flex-direction: column;
  background: #1d1d1d;
  border: 1px solid #2a2a2a;
  border-right: 0;
  white-space: nowrap;
  overflow: hidden;
}

.tree li { padding-left: 4px; line-height: 15px; }
.tree ul ul { margin-left: -4px; }
.tree li li { padding-left: 21px; height: 15px; }
.tree > ul > li:last-child { height: 15px; }

.tree svg {
  display: inline-block;
  vertical-align: middle;
}

.tree .dev { margin: 0 5px 0 8px; }
.tree > ul > li > .dev { margin: 0 5px 0 7px; }

.splitter {
  width: 8px;
  background: #303030;
  display: flex;
  flex-direction: column;
  align-items: center;
  justify-content: center;
  position: relative;
}

.fold {
  position: absolute;
  top: 13px;
  border: 2px solid transparent;
  border-right-color: #888;
}

.splitter .dots {
  width: 3px;
  height: 18px;
  background: repeating-linear-gradient(#707070 0 1px, transparent 1px 3px);
}

.content {
  flex: 1;
  min-width: 0;
  display: flex;
  flex-direction: column;
  margin-right: 4px;
}

.drive-grid .dev { margin: 0 5px 0 9px; }
.content .preview { height: 26px; }

.history { flex: none; height: 48px; }

.undo {
  display: flex;
  align-items: center;
  justify-content: space-between;
  padding: 8px 6px 0 4px;
}

/* editor */
.top {
  flex: 1;
  min-height: 0;
  display: flex;
  gap: 3px;
}

.editor {
  flex: 1;
  border: 1px solid #2463ac;
  padding: 0 5px;
}

.editor .tabs { padding: 1px 0 0 2px; }
.editor .tab.active { font-weight: 500; color: #a0a0a0; }

.tab.more {
  margin-left: auto;
  margin-right: -3px;
  color: #b4b4b4;
}

.nav-row {
  display: flex;
  align-items: center;
  height: 35px;
  gap: 8px;
}

.nav-row .ic { height: 12px; }

.overview {
  flex: 1;
  height: 23px;
  background: #6df3b7;
  border: 2px solid #626a67;
  border-left-width: 4px;
  border-right-width: 4px;
  border-radius: 4px;
}

.overview svg { width: 100%; height: 100%; }
.nav-row .icon-btn:last-child { margin-right: 12px; }

.time-row {
  display: flex;
  align-items: center;
  height: 26px;
  padding-top: 6px;
  gap: 1px;
}

.ruler {
  flex: 1;
  position: relative;
  display: flex;
  height: 20px;
  border-top: 1px solid #111;
  background: #232323;
  margin-right: 5px;
}

.ruler-ticks {
  position: absolute;
  width: 100%;
  height: 100%;
}

.t { flex: 84; text-align: center; }
.t.hms { flex: 43; text-align: left; padding-left: 3px; }
.t.end { flex: 63; text-indent: 21px; }

.mark {
  position: absolute;
  bottom: 1px;
  width: 10px;
  height: 10px;
  margin-left: -5px;
}

.cue { left: 52%; fill: #24568f; }
.head { left: 88%; fill: #2d8ceb; }

.sq {
  display: flex;
  align-items: center;
  justify-content: center;
  width: 16px;
  height: 16px;
  background: #171717;
  border-radius: 2px;
  color: #2d8ceb;
}

.time-row .sq:last-child { margin-right: 20px; }
.sq .ic { height: 10px; }

.wave-row {
  flex: 1;
  min-height: 0;
  display: flex;
}

.wave {
  flex: 1;
  position: relative;
  background: #48dc98;
}

.wave-svg {
  position: absolute;
  width: 100%;
  height: 100%;
}

.center { stroke: #67dc9c; }
.db { stroke: #38d080; stroke-opacity: 0.2; }
.rim { stroke: #06180f; stroke-width: 2; }
.split { stroke: #5f8f6c; }
.cue-line { stroke: #705850; stroke-dasharray: 2 2; }
.head-line { stroke: #c0503c; stroke-width: 2; stroke-opacity: 0.75; }

.fade {
  position: absolute;
  top: 2px;
  width: 9px;
  height: 9px;
}

.fade-in { left: 10px; }
.fade-out { right: 10px; }

.hud {
  position: absolute;
  left: 36%;
  top: 5%;
  display: flex;
  align-items: center;
  width: 99px;
  height: 21px;
  background: rgba(38, 56, 49, 0.9);
  border: 1px solid #2f5144;
}

.hud-grip {
  width: 6px;
  height: 19px;
  background: repeating-linear-gradient(#7e8f87 0 1px, #46574f 1px 3px);
}

.hud-bars { width: 13px; height: 9px; margin: 0 4px 0 2px; }
.knob { width: 14px; height: 14px; }
.gain { flex: 1; padding-left: 4px; white-space: nowrap; color: #a0aaa5; }
.gain b { font-weight: 700; color: #2d8ceb; }

.hud-pin {
  width: 16px;
  height: 16px;
  padding-left: 4px;
  border-left: 1px solid #45584f;
}

.hud-pin svg { width: 8px; height: 8px; }

.brand {
  position: absolute;
  left: 41%;
  bottom: 22px;
  color: #a5efca;
  font-family: "Noto Sans", sans-serif;
  font-size: 19px;
  font-weight: 900;
  line-height: 30px;
  -webkit-text-stroke: 5px #000;
  paint-order: stroke fill;
  stroke-linejoin: round;
}

.scale {
  width: 58px;
  border: 1px solid #151515;
  border-left: 0;
  display: flex;
  flex-direction: column;
}

.scale-ch {
  flex: 1;
  min-height: 0;
  display: flex;
  align-items: center;
  justify-content: space-between;
  padding-right: 3px;
  border-bottom: 1px solid #151515;
}

.db-scale {
  width: 34px;
  height: 100%;
}

.db-scale line, .level-scale line { stroke: #6c6c6c; }
.db-scale text { fill: #949494; font-size: 9px; }

.ch {
  width: 16px;
  height: 13px;
  line-height: 12px;
  background: #171717;
  border-radius: 2px;
  color: #2d8ceb;
  font-size: 8px;
  font-weight: 700;
}

.hscroll {
  display: flex;
  align-items: center;
  justify-content: space-between;
  height: 9px;
  flex: none;
  padding: 0 14px 0 198px;
  background: #303030;
  border-bottom: 1px solid #151515;
}

.hscroll svg { width: 4px; height: 3px; }

.hscroll .dots {
  width: 19px;
  height: 3px;
  background: repeating-linear-gradient(90deg, #777 0 1px, transparent 1px 2px);
}

.transport {
  display: flex;
  align-items: center;
  height: 29px;
  flex: none;
  padding-left: 3px;
}

.clock {
  width: 103px;
  color: #2d8ceb;
  font-size: 13px;
  font-weight: 500;
  padding-top: 2px;
}

.keys {
  flex: 1;
  display: flex;
  justify-content: space-between;
  max-width: 236px;
}

.key {
  width: 24px;
  display: flex;
  justify-content: center;
  color: #a8a8a8;
}

.keys .ic { width: 12px; height: 10px; }
.keys.zooms { flex: none; margin: 0 -4px 0 auto; }
.zooms .ic { width: 14px; height: 13px; }
.key.play { color: #16a016; }
.key.pause { color: #eab600; }
.key.rec { color: #f23c3c; }
.key.off { color: #4a4a4a; }

/* essential sound */
.essential { flex: 0 0 auto; width: 32.5%; }
.essential .tabs { height: 22px; }

.none {
  height: 25px;
  padding: 0 8px;
  border-top: 2px solid #2b2b2b;
  border-bottom: 2px solid #2b2b2b;
  color: #9a9a9a;
  font-style: italic;
  font-weight: 700;
  line-height: 24px;
}

.preset {
  display: flex;
  align-items: center;
  gap: 4px;
  height: 26px;
  padding: 0 8px;
  color: #444;
}

.preset .select {
  flex: 1;
  background: #282828;
  border-color: #262626;
  color: #444;
}

.rule {
  height: 26px;
  border-top: 2px solid #2b2b2b;
  border-bottom: 2px solid #2b2b2b;
}

/* bottom */
.bottom {
  flex: none;
  display: flex;
  gap: 3px;
  height: 73px;
}

.levels { flex: 1; padding: 0 5px; }
.levels .tabs { padding-left: 4px; height: 25px; }

.meter {
  display: flex;
  gap: 2px;
  height: 32px;
  padding: 1px;
  background: #101010;
}

.bars {
  flex: 1;
  display: flex;
  flex-direction: column;
  gap: 1px;
  background: linear-gradient(#e0c020, #e0c020) right / 1px 100% no-repeat #1b1b1b;
}

.bar-l, .bar-r {
  flex: 1;
  display: flex;
}

.bar-l { width: 96%; }
.bar-r { width: 98%; }
.g { flex: 279; background: #3bf148; }
.y { flex: 81; background: #f5d047; }
.r { flex: 25; background: #f84646; }
.bar-r .r { flex: 32; }

.clips {
  width: 6px;
  display: flex;
  flex-direction: column;
  gap: 1px;
}

.clips i {
  flex: 1;
  background: #f84646;
}

.level-scale {
  width: 100%;
  height: 15px;
}

.level-scale text {
  fill: #949494;
  font-size: 8px;
  text-anchor: middle;
}

.selview { width: 34%; }

.times {
  width: 208px;
  margin: 0 0 0 8px;
  border-collapse: collapse;
  table-layout: fixed;
}

.times th, .times td {
  height: 16px;
  padding: 0;
  font-weight: 500;
  text-align: left;
}

.times th:first-child { width: 40px; }
.times td { color: #2d8ceb; font-weight: 600; }

/* status bar */
.status {
  display: flex;
  align-items: center;
  height: 17px;
  padding-left: 6px;
  background: #232323;
  border-top: 1px solid #171717;
}

.msg { flex: 1; }

.cell {
  height: 12px;
  line-height: 12px;
  padding: 0 0 0 6px;
  border-left: 1px solid #2e2e2e;
  white-space: nowrap;
}

.cell.empty { width: 39px; }
.cell.blank { width: 79px; }
.cell.format { min-width: 142px; }
.cell.size { min-width: 54px; }
.cell.dur { min-width: 51px; padding-left: 12px; }
.cell.free { min-width: 63px; }
.cell.tail { width: 37px; }
```

FILE: script.js
```js
const NS = "http://www.w3.org/2000/svg";

function add(svg, tag, attrs, text) {
  const el = document.createElementNS(NS, tag);
  for (const key in attrs) el.setAttribute(key, attrs[key]);
  if (text) el.textContent = text;
  svg.appendChild(el);
}

// amplitude scale, positions in percent of one channel
const half = [[15, "-3"], [25, "-6"], [32, "-9"], [43, "-18"]];
const minor = [4, 8, 11.5, 18, 21.5, 28, 30, 36, 40];

document.querySelectorAll(".db-scale").forEach(svg => {
  add(svg, "text", { x: 6, y: "5%" }, "dB");
  add(svg, "text", { x: 6, y: "51.5%" }, "-∞");
  add(svg, "line", { x1: 0, x2: 4, y1: "50%", y2: "50%" });
  half.forEach(([p, label]) => {
    [p, 100 - p].forEach(y => {
      add(svg, "line", { x1: 0, x2: 4, y1: y + "%", y2: y + "%" });
      add(svg, "text", { x: 6, y: y + 1.5 + "%" }, label);
    });
  });
  minor.forEach(p => {
    [p, 100 - p].forEach(y => add(svg, "line", { x1: 0, x2: 2, y1: y + "%", y2: y + "%" }));
  });
});

// level meter scale from -60 to 0 dB
const levels = document.querySelector(".level-scale");
for (let db = -60; db <= 0; db++) {
  const x = 0.3 + (db + 60) * 1.629 + "%";
  add(levels, "line", { x1: x, x2: x, y1: 0, y2: db % 3 ? 1 : 2 });
  if (db % 3 === 0) {
    add(levels, "text", { x: db === -60 ? "1%" : x, y: 12 }, db === -60 ? "dB" : String(db));
  }
}
```
